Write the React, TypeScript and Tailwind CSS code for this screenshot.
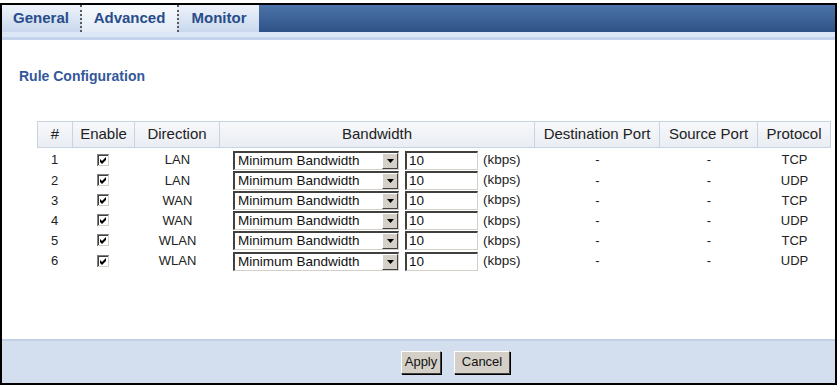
import React from "react";

const rows = [
  { n: 1, dir: "LAN", proto: "TCP" },
  { n: 2, dir: "LAN", proto: "UDP" },
  { n: 3, dir: "WAN", proto: "TCP" },
  { n: 4, dir: "WAN", proto: "UDP" },
  { n: 5, dir: "WLAN", proto: "TCP" },
  { n: 6, dir: "WLAN", proto: "UDP" },
];

function Check() {
  return (
    <svg width="13" height="13" viewBox="0 0 13 13" className="block">
      <rect x="0" y="0" width="13" height="13" fill="#ffffff" />
      <rect x="0" y="0" width="12" height="12" fill="#808080" />
      <rect x="1" y="1" width="11" height="11" fill="#d4d0c8" />
      <rect x="1" y="1" width="10" height="10" fill="#404040" />
      <rect x="2" y="2" width="9" height="9" fill="#ffffff" />
      <path d="M3 5 L5 7 L9 3 L9 6 L5 10 L3 8 Z" fill="#000" />
    </svg>
  );
}

function Select() {
  return (
    <div className="flex h-[19px] w-[166px] border-t-2 border-l-2 border-t-[#404040] border-l-[#404040] border-b border-r border-b-[#d4d0c8] border-r-[#d4d0c8] bg-white">
      <div className="flex-1 pl-[3px] leading-[16px] text-[13.5px] text-[#111]">Minimum Bandwidth</div>
      <div className="flex w-[16px] items-center justify-center border border-t-white border-l-white border-b-[#404040] border-r-[#404040] bg-[#d4d0c8]">
        <svg width="7" height="4" viewBox="0 0 7 4">
          <path d="M0 0 H7 L3.5 4 Z" fill="#000" />
        </svg>
      </div>
    </div>
  );
}

function Input() {
  return (
    <div className="h-[19px] w-[73px] border-t-2 border-l-2 border-t-[#404040] border-l-[#404040] border-b border-r border-b-[#d4d0c8] border-r-[#d4d0c8] bg-white pl-[2px] text-[13.5px] leading-[16px] text-[#111]">
      10
    </div>
  );
}

function Btn({ children, w }: { children: React.ReactNode; w: string }) {
  return (
    <div className={`flex h-[23px] items-center justify-center border border-t-white border-l-white border-b-[#404040] border-r-[#404040] bg-[#d4d0c8] text-[13px] text-[#111] shadow-[1px_1px_0_#000] ${w}`}>
      {children}
    </div>
  );
}

export default function App() {
  const font = { fontFamily: '"Liberation Sans", Arial, sans-serif' };
  return (
    <div className="h-[387px] w-[840px] overflow-hidden bg-white" style={font}>
      <div className="h-[3px]" />
      <div className="flex h-[382px] w-[837px] flex-col border-2 border-black">
        {/* tabs */}
        <div className="flex h-[27px]">
          <div className="flex w-[80px] items-center justify-center border-r-2 border-dotted border-r-[#5a5a5a] bg-gradient-to-b from-[#eef3fa] to-[#c9d8ee] text-[15px] font-bold text-[#284d8a]">
            General
          </div>
          <div className="flex w-[95px] items-center justify-center bg-gradient-to-b from-[#f8fafd] to-[#e3ebf6] text-[15px] font-bold text-[#284d8a]">
            Advanced
          </div>
          <div className="flex w-[82px] items-center justify-center border-l-2 border-dotted border-l-[#5a5a5a] bg-gradient-to-b from-[#eef3fa] to-[#c9d8ee] text-[15px] font-bold text-[#284d8a]">
            Monitor
          </div>
          <div className="flex-1 bg-gradient-to-b from-[#4c74aa] to-[#2f5286]" />
        </div>
        <div className="h-[5px] bg-[#dbe6f6]" />
        <div className="h-[3px] bg-[#c3d3ec]" />
        {/* content */}
        <div className="flex-1">
          <div className="pl-[17px] pt-[26px] text-[14px] font-bold text-[#33589a]">Rule Configuration</div>
          <div className="ml-[35px] mt-[34px] w-[794px]">
            <div className="flex h-[27px] border-t border-b border-[#c9d4e3] bg-gradient-to-b from-[#f7f8fa] to-[#e9edf3] text-[15px] text-[#222]">
              <div className="flex w-[36px] items-center justify-center border-l border-r border-[#c9d4e3]">#</div>
              <div className="flex w-[62px] items-center justify-center border-r border-[#c9d4e3]">Enable</div>
              <div className="flex w-[85px] items-center justify-center border-r border-[#c9d4e3]">Direction</div>
              <div className="flex w-[315px] items-center justify-center border-r border-[#c9d4e3]">Bandwidth</div>
              <div className="flex w-[125px] items-center justify-center border-r border-[#c9d4e3]">Destination Port</div>
              <div className="flex w-[98px] items-center justify-center border-r border-[#c9d4e3]">Source Port</div>
              <div className="flex w-[73px] items-center justify-center border-r border-[#c9d4e3]">Protocol</div>
            </div>
            <div className="pt-[2px]">
              {rows.map((r) => (
                <div key={r.n} className="flex h-[20.2px] items-center text-[13px] text-[#222]">
                  <div className="w-[35px] text-center">{r.n}</div>
                  <div className="flex w-[63px] justify-center">
                    <Check />
                  </div>
                  <div className="w-[85px] text-center">{r.dir}</div>
                  <div className="flex w-[315px] items-center pl-[13px]">
                    <Select />
                    <div className="ml-[6px]">
                      <Input />
                    </div>
                    <div className="ml-[5px] text-[13.5px]">(kbps)</div>
                  </div>
                  <div className="w-[125px] text-center">-</div>
                  <div className="w-[98px] text-center">-</div>
                  <div className="w-[73px] text-center">{r.proto}</div>
                </div>
              ))}
            </div>
          </div>
        </div>
        {/* bottom bar */}
        <div className="flex h-[44px] items-center gap-[13px] border-t-2 border-t-[#c0d0e6] bg-[#d3dfef] pl-[399px]">
          <Btn w="w-[40px]">Apply</Btn>
          <Btn w="w-[56px]">Cancel</Btn>
        </div>
      </div>
    </div>
  );
}
